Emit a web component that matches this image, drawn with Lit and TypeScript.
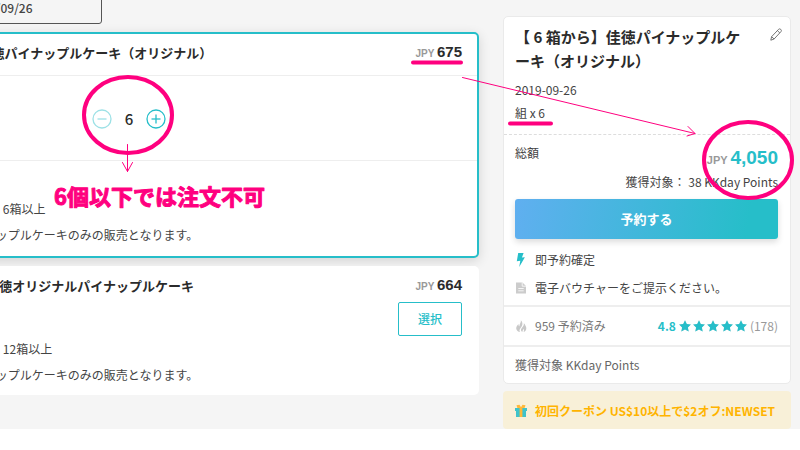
import { LitElement, html, css, svg } from "lit";
import { customElement, property, state } from "lit/decorators.js";

@customElement("price-tag")
class PriceTag extends LitElement {
  @property() amount = "";
  @property({ type: Boolean, reflect: true }) total = false;

  static styles = css`
    :host {
      font-family: "Liberation Sans", Arial, sans-serif;
      font-weight: 700;
      font-size: 15px;
      line-height: 24px;
      color: #2b2b2b;
      white-space: nowrap;
    }
    .currency {
      font-size: 10px;
      color: #999;
    }
    :host([total]) {
      font-size: 19px;
      color: #26bec9;
    }
    :host([total]) .currency {
      font-size: 11px;
    }
  `;

  render() {
    return html`<span class="currency">JPY </span><span>${this.amount}</span>`;
  }
}

@customElement("star-rating")
class StarRating extends LitElement {
  @property({ type: Number }) score = 0;

  static styles = css`
    :host {
      display: flex;
      gap: 2px;
    }
    svg {
      display: block;
      width: 12px;
      height: 12px;
    }
    .empty {
      fill: #ddd;
    }
    .full {
      fill: #26bec9;
    }
  `;

  render() {
    const d = "M6 .2 7.8 3.9 11.9 4.5 8.9 7.4 9.7 11.6 6 9.6 2.3 11.6 3.1 7.4 .1 4.5 4.2 3.9Z";
    return [0, 1, 2, 3, 4].map((i) => {
      const part = Math.max(0, Math.min(1, this.score - i));
      return html`<svg viewBox="0 0 12 12" aria-hidden="true">
        <clipPath id="part"><rect width=${part * 12} height="12" /></clipPath>
        <path class="empty" d=${d} />
        <path class="full" clip-path="url(#part)" d=${d} />
      </svg>`;
    });
  }
}

@customElement("app-root")
class AppRoot extends LitElement {
  @state() private quantity = 6;

  static styles = css`
    :host {
      display: block;
      font-family: "Noto Sans CJK JP", "Noto Sans", sans-serif;
      font-size: 12px;
      line-height: 24px;
      color: #444;
    }
    * {
      box-sizing: border-box;
    }
    h2,
    p,
    ul {
      margin: 0;
      padding: 0;
      list-style: none;
    }
    button {
      font: inherit;
      cursor: pointer;
    }
    .page {
      position: relative;
      overflow: hidden;
      display: grid;
      grid-template-columns: minmax(0, 1fr) 288px;
      gap: 24px;
      padding-right: 9px;
      background: #f5f5f5;
    }

    .options {
      margin-left: -118px;
      margin-top: -8px;
      display: flex;
      flex-direction: column;
      align-items: stretch;
      gap: 8px;
    }
    .date {
      width: 203px;
      height: 32px;
      margin-left: 17px;
      padding: 0;
      border: 1px solid #555;
      border-radius: 3px;
      background: #f5f5f5;
      color: #444;
      font-weight: 500;
    }
    .option {
      border-radius: 5px;
      background: #fff;
      padding: 0 17px 0 18px;
    }
    .selected {
      border: 2px solid #26bec9;
      padding: 0 15px 0 16px;
      box-shadow: 0 3px 12px rgba(0, 0, 0, 0.14);
    }
    .head {
      display: flex;
      justify-content: space-between;
      align-items: center;
      height: 36px;
      padding-top: 4px;
    }
    .selected .head {
      height: 41px;
      padding: 0 0 3px;
    }
    .name {
      font-size: 13px;
      font-weight: 700;
      line-height: 24px;
      color: #2b2b2b;
      white-space: nowrap;
    }
    .amount {
      display: grid;
      grid-template-columns: 192px auto;
      justify-content: start;
      align-items: center;
      height: 86px;
      margin: 0 -15px 0 -16px;
      padding: 2px 0 0 16px;
      border-top: 1px solid #eee;
      border-bottom: 1px solid #eee;
    }
    .stepper {
      display: grid;
      grid-template-columns: 20px 34px 20px;
      align-items: center;
    }
    .count {
      text-align: center;
      font-size: 15px;
      font-weight: 500;
      color: #2b2b2b;
    }
    .step {
      display: block;
      width: 20px;
      height: 20px;
      padding: 0;
      border: 0;
      background: none;
      color: #26bec9;
    }
    .step:disabled {
      opacity: 0.45;
    }
    .step svg {
      display: block;
      width: 20px;
      height: 20px;
    }
    .details {
      line-height: 26px;
      white-space: nowrap;
      padding-bottom: 7px;
    }
    .selected .details {
      padding: 35px 0 8px;
    }
    .choose {
      display: block;
      width: 64px;
      height: 34px;
      margin-left: auto;
      padding: 0;
      border: 1px solid #26bec9;
      border-radius: 2px;
      background: #fff;
      color: #26bec9;
      font-weight: 500;
    }

    .side {
      padding-top: 16px;
      display: flex;
      flex-direction: column;
      gap: 7px;
    }
    .order {
      border: 1px solid #eaeaea;
      border-radius: 5px;
      background: #fff;
    }
    .summary {
      padding: 8px 12px 10px 11px;
      border-bottom: 1px dashed #ddd;
      line-height: 23px;
    }
    .title-row {
      display: flex;
      justify-content: space-between;
      align-items: flex-start;
      margin-bottom: 5px;
    }
    .title {
      width: 234px;
      font-size: 15px;
      line-height: 24px;
      font-weight: 700;
      color: #2b2b2b;
      line-break: anywhere;
    }
    .edit {
      padding: 3px 0 0;
      border: 0;
      background: none;
      line-height: 0;
      margin-right: -4px;
    }
    .checkout {
      padding: 6px 12px 3px 11px;
      border-bottom: 2px solid #eee;
    }
    .total {
      display: flex;
      justify-content: space-between;
      align-items: flex-start;
      height: 29px;
    }
    .total price-tag {
      padding-top: 5px;
    }
    .points {
      text-align: right;
    }
    .reserve {
      display: block;
      width: 100%;
      height: 40px;
      margin: 5px 0 7px;
      padding: 0;
      border: 0;
      border-radius: 3px;
      background: linear-gradient(100deg, #60aff0, #26bec9 88%);
      box-shadow: 0 3px 6px rgba(0, 0, 0, 0.14);
      color: #fff;
      font-size: 13px;
      font-weight: 700;
    }
    .line {
      display: flex;
      align-items: center;
      height: 28px;
    }
    .icon {
      flex: none;
      width: 20px;
      height: 14px;
    }
    .stats {
      display: flex;
      justify-content: space-between;
      align-items: center;
      height: 40px;
      padding: 0 12px 0 11px;
      border-bottom: 2px solid #eee;
      color: #777;
    }
    .rating {
      display: flex;
      align-items: center;
      gap: 3px;
      color: #999;
    }
    .score {
      color: #26bec9;
      font-weight: 700;
    }
    .earn {
      padding: 6px 12px 6px 11px;
      color: #666;
    }
    .coupon {
      display: flex;
      align-items: center;
      height: 38px;
      padding: 2px 12px 0;
      border-radius: 4px;
      background: #f8f0d8;
      color: #ffb400;
      font-weight: 700;
      white-space: nowrap;
      text-decoration: none;
    }

    .notes {
      position: absolute;
      top: 0;
      left: 0;
      width: 800px;
      height: 429px;
      pointer-events: none;
      fill: none;
      stroke: #ff007f;
      stroke-width: 1;
      stroke-linecap: round;
      stroke-linejoin: round;
    }
    .thick {
      stroke-width: 4;
    }
    .note-text {
      fill: #ff007f;
      font-size: 22px;
      font-weight: 700;
    }
  `;

  private stepIcon(plus: boolean) {
    return html`<svg viewBox="0 0 20 20" fill="none" stroke="currentColor" stroke-width="1.3">
      <circle cx="10" cy="10" r="9" />
      <path d="M5.5 10h9" />
      ${plus ? svg`<path d="M10 5.5v9" />` : ""}
    </svg>`;
  }

  render() {
    return html`
      <main class="page">
        <div class="options">
          <button class="date">2019/09/26</button>

          <section class="option selected">
            <div class="head">
              <h2 class="name">【 6 箱から】佳徳パイナップルケーキ（オリジナル）</h2>
              <price-tag amount="675"></price-tag>
            </div>
            <div class="amount">
              <span>組</span>
              <div class="stepper">
                <button class="step" aria-label="減らす" ?disabled=${this.quantity <= 6}
                  @click=${() => (this.quantity -= 1)}>${this.stepIcon(false)}</button>
                <span class="count">${this.quantity}</span>
                <button class="step" aria-label="増やす"
                  @click=${() => (this.quantity += 1)}>${this.stepIcon(true)}</button>
              </div>
            </div>
            <ul class="details">
              <li>- 最少のご購入数：6箱以上</li>
              <li>対象は佳徳パイナップルケーキのみの販売となります。</li>
            </ul>
          </section>

          <section class="option">
            <div class="head">
              <h2 class="name">【 12 箱から】佳徳オリジナルパイナップルケーキ</h2>
              <price-tag amount="664"></price-tag>
            </div>
            <button class="choose">選択</button>
            <ul class="details">
              <li>- 最少のご購入数：12箱以上</li>
              <li>対象は佳徳パイナップルケーキのみの販売となります。</li>
            </ul>
          </section>
        </div>

        <aside class="side">
          <section class="order">
            <div class="summary">
              <div class="title-row">
                <h2 class="title">【 6 箱から】佳徳パイナップルケーキ（オリジナル）</h2>
                <button class="edit" aria-label="編集">
                  <svg width="12" height="13" viewBox="0 0 12 13" fill="none" stroke="#666" stroke-linejoin="round">
                    <path d="M.8 12.2 1.6 8.7 8.6 1.3Q9.6.4 10.7 1.3 11.9 2.4 11 3.6L4.1 11Z M7.4 2.6 9.8 4.9 M1.6 8.7 4.1 11" stroke-width=".9" />
                  </svg>
                </button>
              </div>
              <p>2019-09-26</p>
              <p>組 x ${this.quantity}</p>
            </div>
            <div class="checkout">
              <div class="total">
                <span>総額</span>
                <price-tag total amount=${(this.quantity * 675).toLocaleString("en-US")}></price-tag>
              </div>
              <p class="points">獲得対象： 38 KKday Points</p>
              <button class="reserve">予約する</button>
              <p class="line">
                <svg class="icon" viewBox="0 0 20 14" fill="#26bec9">
                  <path d="M3.2 0H8.6L6.9 4.6 9.9 4.2 4.2 14 5.3 7.7 1.8 8.2Z" />
                </svg>
                即予約確定
              </p>
              <p class="line">
                <svg class="icon" viewBox="0 0 20 14">
                  <path fill="#ccc" d="M1 1.5H7.5L11 5V12.5H1Z" />
                  <path stroke="#fff" fill="none" d="M7.2 1.5V5.2H11 M3.3 7.5H8.7 M3.3 9.8H8.7" stroke-width=".8" />
                </svg>
                電子バウチャーをご提示ください。
              </p>
            </div>
            <div class="stats">
              <span class="line">
                <svg class="icon" viewBox="0 0 20 14" fill="#c8c8c8">
                  <path d="M5.8 1.2C6.3 4 4 5.2 4.6 7.3 3.6 7 3.4 6 3.6 5 1.4 6.8.6 9 1.7 11 2.4 12.3 3.7 13 5 13 3.9 11.3 4.9 10 5.8 8.8 6.8 7.4 7.8 5.8 7.3 3.8 7 2.6 6.5 1.8 5.8 1.2Z" />
                  <path d="M8.8 4.2C9.4 7 6.3 8.6 6 10.6 5.8 11.8 6.4 12.7 7.4 13 7.2 11.6 8.4 11 8.7 9.8 9.2 10.8 9 12 8.6 13 10.4 12.3 11.5 10.7 11.3 8.9 11.1 7.7 10.5 7 10.2 6 9.9 5.2 9.5 4.6 8.8 4.2Z" />
                </svg>
                959 予約済み
              </span>
              <span class="rating">
                <span class="score">4.8</span>
                <star-rating score="4.8"></star-rating>
                <span>(178)</span>
              </span>
            </div>
            <p class="earn">獲得対象 KKday Points</p>
          </section>

          <a class="coupon" href="#coupon">
            <svg class="icon" viewBox="0 0 20 14">
              <path fill="#3fc3cb" d="M0 4H12V7H0Z M1 7H11V13H1Z" />
              <path fill="#ffb838" d="M4.6 4H7.4V13H4.6Z M1.5 1.2 4.5.8 6 3.2 7.5.8 10.5 1.2 9.6 4H2.4Z" />
            </svg>
            初回クーポン US$10以上で$2オフ:NEWSET
          </a>
        </aside>

        <svg class="notes" viewBox="0 0 800 429">
          <ellipse class="thick" cx="128" cy="115" rx="44" ry="38" />
          <path d="M127.5 144.5V171.5 M122.5 162.5 127.5 171.5 132.5 162.5" />
          <path class="thick" d="M413 62.5H461 M510 123.5H551" />
          <path d="M462.5 77.5 695 133.5 M688 126.5 695 133.5 687 136" />
          <ellipse class="thick" cx="748" cy="160" rx="44" ry="38" />
          <text class="note-text" x="54" y="205">6個以下では注文不可</text>
        </svg>
      </main>
    `;
  }
}
